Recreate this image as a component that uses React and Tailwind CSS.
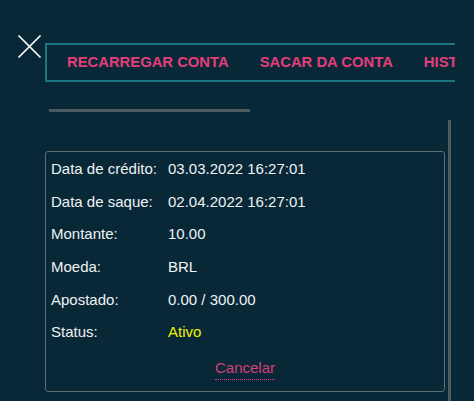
import React from "react";

const rows = [
  { label: "Data de crédito:", value: "03.03.2022 16:27:01" },
  { label: "Data de saque:", value: "02.04.2022 16:27:01" },
  { label: "Montante:", value: "10.00" },
  { label: "Moeda:", value: "BRL" },
  { label: "Apostado:", value: "0.00 / 300.00" },
  { label: "Status:", value: "Ativo", highlight: true },
];

const tabs = ["RECARREGAR CONTA", "SACAR DA CONTA", "HISTÓRICO"];

export default function App() {
  return (
    <div
      className="relative w-[474px] h-[401px] overflow-hidden bg-[#082838] pt-[43px] pl-[45px]"
      style={{ fontFamily: '"Liberation Sans", Arial, sans-serif' }}
    >
      <button className="absolute left-[17px] top-[34px] w-[25px] h-[25px]">
        <svg viewBox="0 0 25 25" className="w-[25px] h-[25px]">
          <path d="M1.5 1.5L23.5 23.5M23.5 1.5L1.5 23.5" stroke="#ffffff" strokeWidth="1.7" fill="none" />
        </svg>
      </button>

      <div className="w-[410px] overflow-hidden">
        <nav className="w-[520px] h-[39px] border-2 border-[#1d7580] flex items-center pl-[20px] gap-[31px]">
          {tabs.map((t) => (
            <span key={t} className="text-[14.8px] font-bold text-[#e23f7a] whitespace-nowrap leading-none">
              {t}
            </span>
          ))}
        </nav>
      </div>

      <div className="mt-[27px] ml-[4px] w-[201px] h-[3px] bg-[#4b5b60]" />

      <div className="flex mt-[8px] h-[281px]">
        <div className="w-[400px]">
          <div className="mt-[31px] h-[241px] border border-[#5f6e73] rounded-[3px] px-[5px] flex flex-col">
            {rows.map((r) => (
              <div key={r.label} className="h-[32.7px] flex items-center text-[15px] leading-[17px]">
                <span className="w-[117px] text-[#eef2f3]">{r.label}</span>
                <span className={r.highlight ? "text-[#f2f200]" : "text-[#eef2f3]"}>{r.value}</span>
              </div>
            ))}
            <div className="flex justify-center mt-[11px]">
              <button className="text-[15px] leading-[17px] text-[#d63f78] pb-[3px] border-b border-dotted border-[#e0407c]">
                Cancelar
              </button>
            </div>
          </div>
        </div>
        <div className="ml-[3px] w-[3px] h-full bg-[#4b5b60]" />
      </div>
    </div>
  );
}
